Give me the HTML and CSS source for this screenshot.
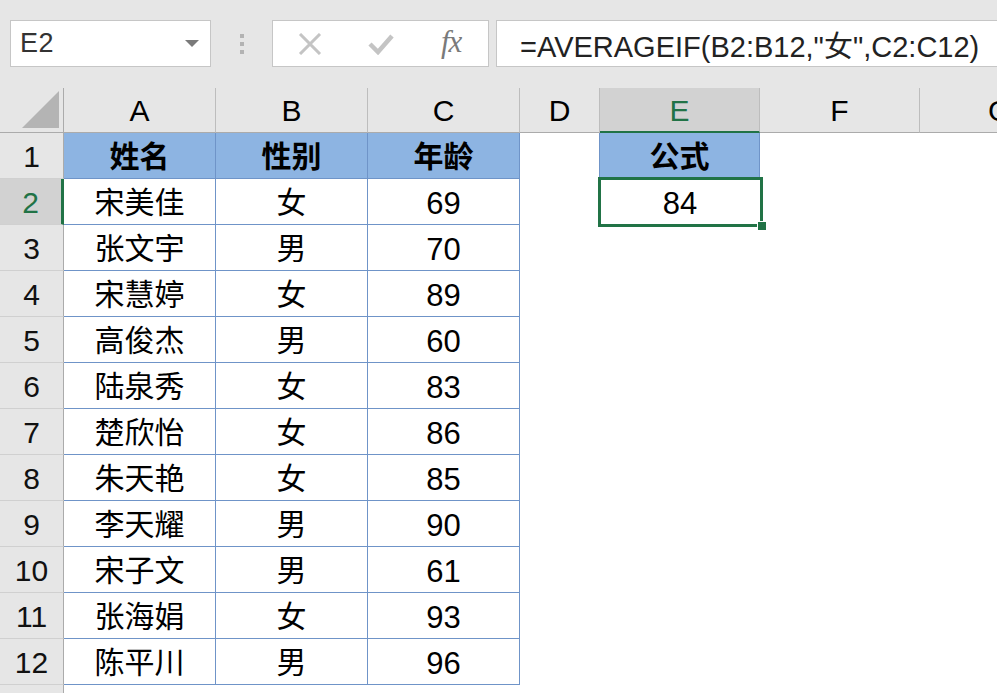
FILE: index.html
```html
<!DOCTYPE html>
<html lang="zh-CN">
<head>
<meta charset="utf-8">
<title>AVERAGEIF</title>
<link rel="stylesheet" href="styles.css">
</head>
<body>
<div class="app">
  <div class="toolbar">
    <div class="namebox">
      <span class="name">E2</span>
      <svg class="caret" width="14" height="8" viewBox="0 0 14 8"><path d="M0 0 H14 L7 7 Z" fill="#7a7a7a"/></svg>
    </div>
    <div class="grip">
      <span></span><span></span><span></span>
    </div>
    <div class="iconbox">
      <svg class="ic-x" width="24" height="22" viewBox="0 0 24 22"><path d="M2 1 L22 21 M22 1 L2 21" stroke="#c4c4c4" stroke-width="3" fill="none"/></svg>
      <svg class="ic-check" width="26" height="22" viewBox="0 0 26 22"><path d="M2 11 L10 19 L24 3" stroke="#c4c4c4" stroke-width="4.5" fill="none"/></svg>
      <span class="fx">fx</span>
    </div>
    <div class="formula">=AVERAGEIF(B2:B12,"女",C2:C12)</div>
  </div>

  <div class="sheet">
    <div class="corner"><svg width="38" height="37" viewBox="0 0 38 37"><path d="M37 0 V37 H0 Z" fill="#b4b4b4"/></svg></div>
    <div class="ch">A</div>
    <div class="ch">B</div>
    <div class="ch">C</div>
    <div class="ch">D</div>
    <div class="ch ch-sel">E</div>
    <div class="ch">F</div>
    <div class="ch ch-clip"><span class="clip">G</span></div>

    <div class="rh">1</div>
    <div class="c t th zh">姓名</div><div class="c t th zh">性别</div><div class="c t th zh">年龄</div>
    <div class="c dl"></div><div class="c t th zh">公式</div><div class="c"></div><div class="c"></div>

    <div class="rh rh-sel">2</div>
    <div class="c t zh">宋美佳</div><div class="c t zh">女</div><div class="c t n">69</div>
    <div class="c"></div><div class="c sel n">84</div><div class="c"></div><div class="c"></div>

    <div class="rh">3</div>
    <div class="c t zh">张文宇</div><div class="c t zh">男</div><div class="c t n">70</div>
    <div class="c"></div><div class="c"></div><div class="c"></div><div class="c"></div>

    <div class="rh">4</div>
    <div class="c t zh">宋慧婷</div><div class="c t zh">女</div><div class="c t n">89</div>
    <div class="c"></div><div class="c"></div><div class="c"></div><div class="c"></div>

    <div class="rh">5</div>
    <div class="c t zh">高俊杰</div><div class="c t zh">男</div><div class="c t n">60</div>
    <div class="c"></div><div class="c"></div><div class="c"></div><div class="c"></div>

    <div class="rh">6</div>
    <div class="c t zh">陆泉秀</div><div class="c t zh">女</div><div class="c t n">83</div>
    <div class="c"></div><div class="c"></div><div class="c"></div><div class="c"></div>

    <div class="rh">7</div>
    <div class="c t zh">楚欣怡</div><div class="c t zh">女</div><div class="c t n">86</div>
    <div class="c"></div><div class="c"></div><div class="c"></div><div class="c"></div>

    <div class="rh">8</div>
    <div class="c t zh">朱天艳</div><div class="c t zh">女</div><div class="c t n">85</div>
    <div class="c"></div><div class="c"></div><div class="c"></div><div class="c"></div>

    <div class="rh">9</div>
    <div class="c t zh">李天耀</div><div class="c t zh">男</div><div class="c t n">90</div>
    <div class="c"></div><div class="c"></div><div class="c"></div><div class="c"></div>

    <div class="rh">10</div>
    <div class="c t zh">宋子文</div><div class="c t zh">男</div><div class="c t n">61</div>
    <div class="c"></div><div class="c"></div><div class="c"></div><div class="c"></div>

    <div class="rh">11</div>
    <div class="c t zh">张海娟</div><div class="c t zh">女</div><div class="c t n">93</div>
    <div class="c"></div><div class="c"></div><div class="c"></div><div class="c"></div>

    <div class="rh">12</div>
    <div class="c t zh">陈平川</div><div class="c t zh">男</div><div class="c t n">96</div>
    <div class="c"></div><div class="c"></div><div class="c"></div><div class="c"></div>

    <div class="rh"></div>
    <div class="c"></div><div class="c"></div><div class="c"></div>
    <div class="c"></div><div class="c"></div><div class="c"></div><div class="c"></div>
  </div>
</div>
</body>
</html>
```

FILE: styles.css
```css
* { box-sizing: border-box; }
html, body { margin: 0; padding: 0; }
body {
  width: 997px;
  height: 693px;
  overflow: hidden;
  background: #ffffff;
  font-family: "Liberation Sans", "Noto Sans CJK SC", Arial, sans-serif;
  color: #000;
}
.app { width: 997px; height: 693px; overflow: hidden; }

.toolbar {
  height: 88px;
  background: #e6e6e6;
  display: flex;
  align-items: flex-start;
  padding: 20px 0 0 10px;
}
.namebox {
  width: 201px;
  height: 47px;
  background: #fff;
  border: 1px solid #c6c6c6;
  display: flex;
  align-items: center;
  justify-content: space-between;
  padding: 0 11px 0 9px;
}
.name { font-size: 27px; color: #333; letter-spacing: 0.5px; }
.caret { margin-top: 1px; }
.grip {
  width: 61px;
  height: 47px;
  display: flex;
  flex-direction: column;
  align-items: center;
  justify-content: center;
  gap: 4px;
}
.grip span { width: 4px; height: 4px; background: #b3b3b3; display: block; }
.iconbox {
  width: 217px;
  height: 47px;
  background: #fff;
  border: 1px solid #c6c6c6;
  display: flex;
  align-items: center;
  padding-left: 25px;
}
.ic-x { margin-right: 46px; }
.ic-check { margin-right: 47px; }
.fx {
  font-family: "Liberation Serif", "Times New Roman", serif;
  font-style: italic;
  font-size: 31px;
  color: #7a7a7a;
  margin-top: -4px;
  letter-spacing: -1px;
}
.formula {
  margin-left: 7px;
  flex: 1;
  height: 47px;
  background: #fff;
  border: 1px solid #c6c6c6;
  border-right: none;
  font-size: 29px;
  color: #222;
  display: flex;
  align-items: center;
  padding-left: 23px;
  white-space: nowrap;
  overflow: hidden;
}

.sheet {
  display: grid;
  grid-template-columns: 64px 152px 152px 152px 80px 160px 160px 1fr;
  grid-template-rows: 45px;
  grid-auto-rows: 46px;
}
.corner {
  background: #e6e6e6;
  border-right: 1px solid #ababab;
  border-bottom: 1px solid #ababab;
  display: flex;
  align-items: flex-end;
  justify-content: flex-end;
  padding: 0 3px 4px 0;
}
.ch {
  background: #e6e6e6;
  border-right: 1px solid #bdbdbd;
  border-bottom: 1px solid #ababab;
  display: flex;
  align-items: center;
  justify-content: center;
  font-size: 30px;
  padding-top: 2px;
}
.ch-sel {
  background: #d2d2d2;
  color: #217346;
  border-bottom: 2px solid #217346;
}
.ch-clip { justify-content: flex-start; padding-left: 68px; border-right: none; overflow: hidden; }
.clip { display: block; }
.rh {
  background: #e6e6e6;
  border-right: 1px solid #ababab;
  border-bottom: 1px solid #d0d0d0;
  display: flex;
  align-items: center;
  justify-content: center;
  font-size: 30px;
  color: #111;
  padding-top: 2px;
}
.rh-sel {
  background: #d2d2d2;
  color: #217346;
  border-right: 3px solid #217346;
}
.c {
  display: flex;
  align-items: center;
  justify-content: center;
  font-size: 31px;
  font-family: "Liberation Sans", "Noto Sans CJK SC", Arial, sans-serif;
}
.zh {
  font-family: "Noto Sans CJK SC", "Liberation Sans", sans-serif;
  font-size: 30px;
  line-height: 1;
  padding-bottom: 4px;
}
.n { padding-top: 4px; }
.t {
  border-right: 1px solid #6f94c8;
  border-bottom: 1px solid #6f94c8;
}
.th {
  background: #8db4e2;
  font-weight: bold;
}
.dl { border-right: 1px solid #6f94c8; }
.sel { position: relative; }
.sel::before {
  content: "";
  position: absolute;
  left: -2px;
  top: -2px;
  right: -3px;
  bottom: -2px;
  border: 3px solid #217346;
}
.sel::after {
  content: "";
  position: absolute;
  right: -6px;
  bottom: -5px;
  width: 8px;
  height: 8px;
  background: #217346;
  box-shadow: 0 0 0 1px #fff;
}
```
